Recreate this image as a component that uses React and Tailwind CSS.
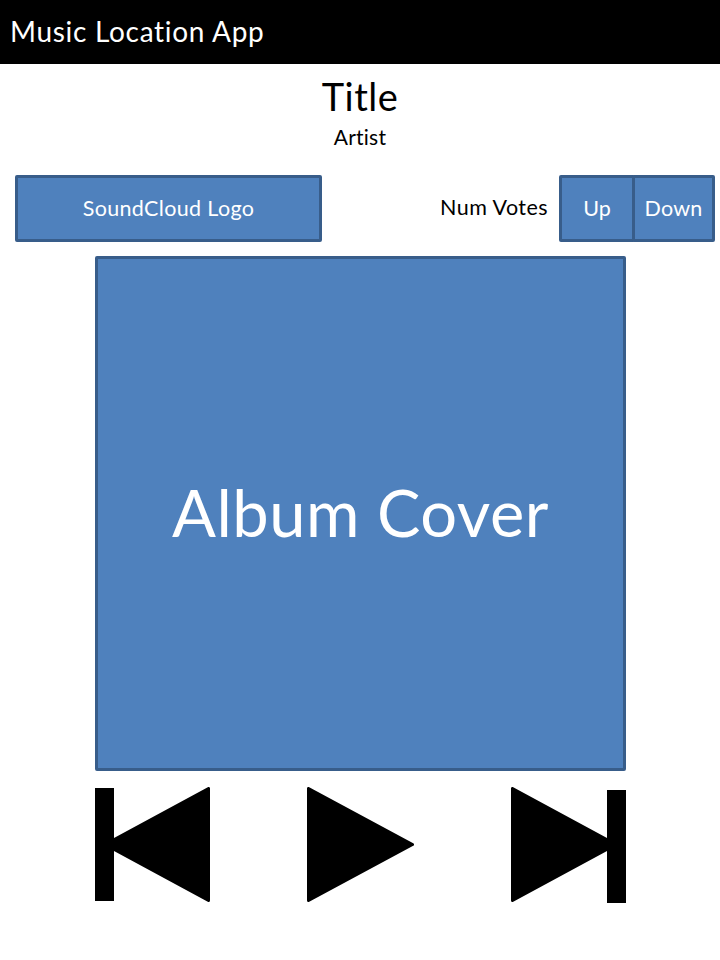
function PlayTriangle({ points }) {
  return (
    <polygon
      points={points}
      fill="#000"
      stroke="#000"
      strokeWidth="3"
      strokeLinejoin="round"
    />
  );
}

function Box({ className, children }) {
  return (
    <div
      className={`flex items-center justify-center rounded-[2px] border-[3px] border-[#385d8a] bg-[#4f81bd] whitespace-nowrap text-white ${className}`}
    >
      {children}
    </div>
  );
}

export default function App() {
  return (
    <div className="flex h-[960px] w-[720px] flex-col overflow-hidden bg-white font-['Lato',sans-serif] text-black [font-variant-ligatures:none]">
      <header className="flex h-16 shrink-0 items-center bg-black pb-[2px] pl-[10px] text-white">
        <h1 className="text-[28px] leading-none tracking-[0.7px] whitespace-nowrap">Music Location App</h1>
      </header>

      <div className="flex h-[111px] shrink-0 flex-col items-center pt-[8px]">
        <h2 className="text-[38px] leading-[48px] tracking-[0.5px]">Title</h2>
        <p className="mt-[5px] text-[21px] leading-6 tracking-[0.25px]">Artist</p>
      </div>

      <div className="flex h-[67px] shrink-0 items-center pr-[5px] pl-[15px]">
        <Box className="h-[67px] w-[307px] text-[21.5px] tracking-[0.35px]">
          <span>SoundCloud Logo</span>
        </Box>
        <span className="ml-auto pb-[2px] text-[21.5px] tracking-[0.45px] whitespace-nowrap">Num Votes</span>
        <div className="ml-[11px] flex">
          <Box className="h-[67px] w-[76px] text-[21.5px]">
            <span>Up</span>
          </Box>
          <Box className="-ml-[3px] h-[67px] w-[83px] text-[21.5px] tracking-[0.2px]">
            <span>Down</span>
          </Box>
        </div>
      </div>

      <Box className="mt-[14px] ml-[95px] h-[515px] w-[531px] shrink-0 text-[65px] tracking-[0.5px]">
        <span className="pb-[2px]">Album Cover</span>
      </Box>

      <div className="mt-4 ml-[95px] flex w-[531px] justify-between">
        <button aria-label="Previous">
          <svg width="115" height="118" viewBox="95 787 115 118" className="block">
            <rect x="95" y="788" width="19" height="113" />
            <PlayTriangle points="208.5,788.5 208.5,900.5 105,844.5" />
          </svg>
        </button>
        <button aria-label="Play">
          <svg width="108" height="118" viewBox="307 787 108 118" className="block">
            <PlayTriangle points="308.5,788.5 308.5,900.5 412.5,844.5" />
          </svg>
        </button>
        <button aria-label="Next">
          <svg width="115" height="118" viewBox="511 787 115 118" className="block">
            <PlayTriangle points="512.5,788.5 512.5,900.5 616,844.5" />
            <rect x="607" y="790" width="19" height="113" />
          </svg>
        </button>
      </div>
    </div>
  );
}
